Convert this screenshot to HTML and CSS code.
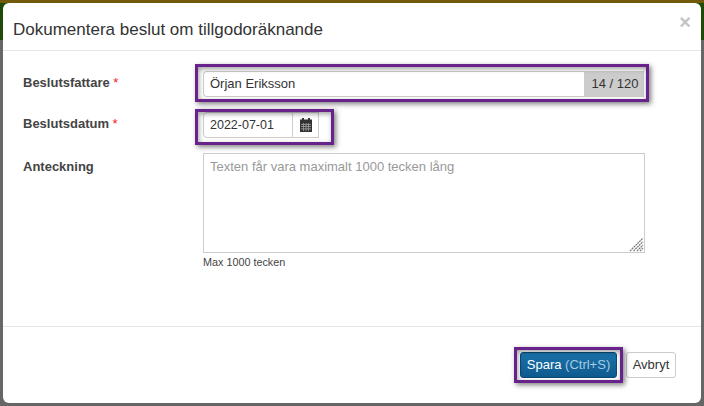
FILE: index.html
```html
<!DOCTYPE html>
<html lang="sv">
<head>
<meta charset="utf-8">
<title>Dokumentera beslut</title>
<link rel="stylesheet" href="styles.css">
</head>
<body>
<div class="backdrop">
  <div class="modal">
    <header class="modal-header">
      <h4 class="modal-title">Dokumentera beslut om tillgodoräknande</h4>
      <span class="close">×</span>
    </header>
    <div class="modal-body">
      <div class="row row-name">
        <label class="label">Beslutsfattare <span class="req">*</span></label>
        <div class="group mark mark-name">
          <span class="input input-name">Örjan Eriksson</span>
          <span class="addon">14 / 120</span>
        </div>
      </div>
      <div class="row row-date">
        <label class="label">Beslutsdatum <span class="req">*</span></label>
        <div class="group mark mark-date">
          <span class="input input-date">2022-07-01</span>
          <span class="cal">
            <svg width="12" height="14" viewBox="0 0 12 14" aria-hidden="true"><path fill="#333" d="M2 0h2v1.500h4V0h2v1.500h2V14H0V1.500h2z"/><path fill="#aaa" d="M1 6h10v.7H1zM1 8.300h10V9H1zM1 10.600h10v.7H1zM3.200 5h.7v8h-.7zM5.700 5h.7v8h-.7zM8.200 5h.7v8h-.7z"/></svg>
          </span>
        </div>
      </div>
      <div class="row row-note">
        <label class="label label-note">Anteckning</label>
        <div class="note-col">
          <div class="textarea">
            <span class="placeholder">Texten får vara maximalt 1000 tecken lång</span>
            <svg class="grip" width="15" height="15" viewBox="0 0 15 15" aria-hidden="true"><path stroke="#777" stroke-width="1.200" fill="none" stroke-dasharray="2 .6" d="M1 14 14 1M4.500 14 14 4.500M8 14l6-6M11 14l3-3"/></svg>
          </div>
          <div class="hint">Max 1000 tecken</div>
        </div>
      </div>
    </div>
    <footer class="modal-footer">
      <button class="btn btn-primary mark mark-save" type="button">Spara <span class="shortcut">(Ctrl+S)</span></button>
      <button class="btn btn-default" type="button">Avbryt</button>
    </footer>
  </div>
</div>
</body>
</html>
```

FILE: styles.css
```css
* { box-sizing: border-box; }
html, body { margin: 0; padding: 0; }
body { font-family: "Liberation Sans", Arial, sans-serif; color: #333; }
.backdrop {
  width: 704px; height: 406px; overflow: hidden; padding: 3px 3px 3px 3px;
  background: linear-gradient(to bottom, #735a0a 0, #735a0a 3px, #1f4a08 3px, #1f4a08 40px, #666 40px, #666 100%);
}
.modal {
  height: 400px; background: #fff; border-radius: 6px;
  display: flex; flex-direction: column;
}
.modal-header {
  height: 48px; border-bottom: 1px solid #e5e5e5; padding: 0 10px;
  display: flex; justify-content: space-between;
}
.modal-title { margin: 0; padding-top: 17px; font-size: 17px; line-height: 20px; font-weight: 400; }
.close { font-size: 20px; font-weight: 700; line-height: 20px; color: #c4c4c4; padding: 9px 0 0 0; }
.modal-body { flex: 1; padding: 20px 0 0 20px; }
.row { display: flex; }
.label { width: 180px; font-size: 13px; font-weight: 700; color: #444; line-height: 24px; }
.label-note { line-height: 28px; }
.req { color: #e22; font-weight: 400; }
.group { display: flex; height: 26px; position: relative; }
.mark::after {
  content: ""; position: absolute; pointer-events: none;
  border: 3px solid #68228b;
  box-shadow: 2px 2px 5px rgba(0,0,0,.5), inset 1px 2px 5px rgba(0,0,0,.38);
}
.mark-name::after { inset: -7px -5px -5px -8px; }
.mark-date::after { inset: -3px -15px -7px -8px; }
.mark-save::after { inset: -6px -7px -6px -7px; }
.input { font-size: 13px; line-height: 24px; padding: 0 6px; border: 1px solid #ccc; border-radius: 4px 0 0 4px; background: #fff; color: #333; }
.input-name { width: 381px; border-right: 0; }
.input-date { width: 90px; font-size: 12.500px; }
.addon { width: 60px; background: #ccc; font-size: 13px; line-height: 26px; text-align: center; color: #333; padding-left: 2px; }
.cal { width: 26px; border: 1px solid #ccc; border-left: 0; display: flex; align-items: center; justify-content: center; }
.row-name { height: 41px; }
.row-date { height: 41px; }
.note-col { width: 442px; }
.textarea { height: 100px; border: 1px solid #ccc; padding: 5px 6px; font-size: 13px; line-height: 16px; position: relative; }
.placeholder { color: #999; }
.grip { position: absolute; right: 0; bottom: 0; }
.hint { font-size: 10.800px; margin-top: 3px; line-height: 13px; color: #444; }
.modal-footer {
  height: 77px; border-top: 1px solid #e5e5e5;
  display: flex; align-items: flex-start; justify-content: flex-end;
  padding: 25px 25px 0 0; gap: 9px;
}
.btn { font-family: inherit; font-size: 13px; line-height: 16px; height: 26px; border-radius: 3px; margin: 0; cursor: pointer; }
.btn-primary { position: relative; width: 97px; padding: 0; color: #fff; border: 1px solid #0a4a78; background: linear-gradient(to bottom, #1a72aa, #0f5a8e); }
.shortcut { color: #a9cbe2; }
.btn-default { width: 50px; padding: 0; color: #333; background: #fff; border: 1px solid #ccc; }
```
